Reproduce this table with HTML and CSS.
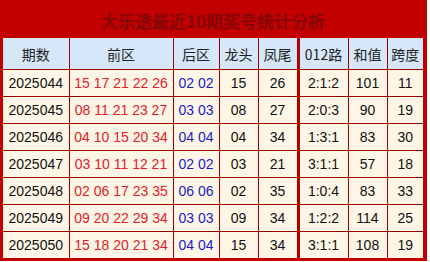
FILE: index.html
```html
<!DOCTYPE html>
<html lang="zh">
<head>
<meta charset="utf-8">
<title>大乐透最近10期奖号统计分析</title>
<link rel="stylesheet" href="styles.css">
</head>
<body>
<div class="board">
  <div class="title">大乐透最近10期奖号统计分析</div>
  <table class="stats">
    <colgroup>
      <col class="c-issue"><col class="c-front"><col class="c-back"><col class="c-head"><col class="c-tail"><col class="c-road"><col class="c-sum"><col class="c-span">
    </colgroup>
    <thead>
      <tr><th>期数</th><th>前区</th><th>后区</th><th>龙头</th><th>凤尾</th><th class="sep">012路</th><th>和值</th><th>跨度</th></tr>
    </thead>
    <tbody>
      <tr><td>2025044</td><td class="red">15 17 21 22 26</td><td class="blue">02 02</td><td>15</td><td>26</td><td class="sep">2:1:2</td><td>101</td><td>11</td></tr>
      <tr><td>2025045</td><td class="red">08 11 21 23 27</td><td class="blue">03 03</td><td>08</td><td>27</td><td class="sep">2:0:3</td><td>90</td><td>19</td></tr>
      <tr><td>2025046</td><td class="red">04 10 15 20 34</td><td class="blue">04 04</td><td>04</td><td>34</td><td class="sep">1:3:1</td><td>83</td><td>30</td></tr>
      <tr><td>2025047</td><td class="red">03 10 11 12 21</td><td class="blue">02 02</td><td>03</td><td>21</td><td class="sep">3:1:1</td><td>57</td><td>18</td></tr>
      <tr><td>2025048</td><td class="red">02 06 17 23 35</td><td class="blue">06 06</td><td>02</td><td>35</td><td class="sep">1:0:4</td><td>83</td><td>33</td></tr>
      <tr><td>2025049</td><td class="red">09 20 22 29 34</td><td class="blue">03 03</td><td>09</td><td>34</td><td class="sep">1:2:2</td><td>114</td><td>25</td></tr>
      <tr><td>2025050</td><td class="red">15 18 20 21 34</td><td class="blue">04 04</td><td>15</td><td>34</td><td class="sep">3:1:1</td><td>108</td><td>19</td></tr>
    </tbody>
  </table>
</div>
</body>
</html>
```
FILE: styles.css
```css
html, body {
  margin: 0;
  padding: 0;
  background: #ffffff;
}
.board {
  width: 427px;
  background: #c20000;
  padding: 0 4px 3px 3px;
  box-sizing: border-box;
}
.title {
  height: 38px;
  box-sizing: border-box;
  padding-top: 10px;
  text-align: center;
  font-family: "Noto Sans CJK SC", sans-serif;
  font-size: 17px;
  line-height: 22px;
  font-weight: bold;
  color: #860606;
}
.stats {
  width: 420px;
  border-collapse: collapse;
  table-layout: fixed;
  font-family: "Liberation Sans", "Noto Sans CJK SC", sans-serif;
  font-size: 14px;
  color: #111111;
}
.c-issue { width: 66px; }
.c-front { width: 104px; }
.c-back { width: 46px; }
.c-head { width: 39px; }
.c-tail { width: 40px; }
.c-road { width: 50px; }
.c-sum { width: 39px; }
.c-span { width: 36px; }
.stats th, .stats td {
  border: 1px solid #9a0000;
  text-align: center;
  padding: 0;
  white-space: nowrap;
}
.stats tr:first-child th { border-top: none; }
.stats tr th:first-child, .stats tr td:first-child { border-left: none; }
.stats tr th:last-child, .stats tr td:last-child { border-right: none; }
.stats tbody tr:last-child td { border-bottom: none; }
.stats th {
  height: 31px;
  background: #d5e7f8;
  font-family: "Noto Sans CJK SC", sans-serif;
  font-weight: normal;
  color: #222222;
}
.stats td {
  height: 26px;
  background: #fdf6e6;
}
.stats .sep { border-left: 3px solid #b40000; }
.stats .red { color: #e4202a; }
.stats .blue { color: #1c1ccc; }
```
